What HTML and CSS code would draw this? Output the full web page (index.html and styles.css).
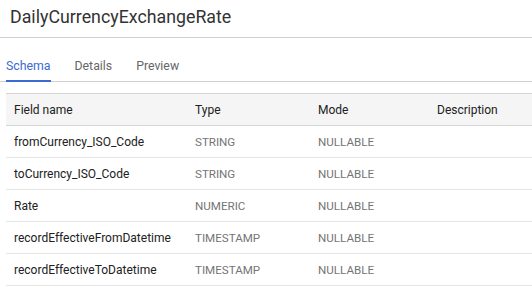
FILE: index.html
```html
<!DOCTYPE html>
<html>
<head>
<meta charset="utf-8">
<link rel="stylesheet" href="styles.css">
</head>
<body>
<header class="title-bar">
  <h1 class="title">DailyCurrencyExchangeRate</h1>
</header>
<nav class="tabs">
  <span class="tab active">Schema</span>
  <span class="tab">Details</span>
  <span class="tab">Preview</span>
</nav>
<div class="table-wrap">
  <table class="schema">
    <colgroup>
      <col class="c1"><col class="c2"><col class="c3"><col class="c4">
    </colgroup>
    <thead>
      <tr><th>Field name</th><th>Type</th><th>Mode</th><th>Description</th></tr>
    </thead>
    <tbody>
      <tr><td class="name">fromCurrency_ISO_Code</td><td class="meta">STRING</td><td class="meta">NULLABLE</td><td></td></tr>
      <tr><td class="name">toCurrency_ISO_Code</td><td class="meta">STRING</td><td class="meta">NULLABLE</td><td></td></tr>
      <tr><td class="name">Rate</td><td class="meta">NUMERIC</td><td class="meta">NULLABLE</td><td></td></tr>
      <tr><td class="name">recordEffectiveFromDatetime</td><td class="meta">TIMESTAMP</td><td class="meta">NULLABLE</td><td></td></tr>
      <tr><td class="name">recordEffectiveToDatetime</td><td class="meta">TIMESTAMP</td><td class="meta">NULLABLE</td><td></td></tr>
    </tbody>
  </table>
</div>
</body>
</html>
```
FILE: styles.css
```css
html, body {
  margin: 0;
  padding: 0;
  background: #fff;
  font-family: Roboto, "Liberation Sans", Arial, sans-serif;
  color: #212121;
}
.title-bar {
  height: 37px;
  border-bottom: 1px solid #d0d0d0;
  box-sizing: content-box;
}
.title {
  margin: 0;
  padding: 6px 0 0 10px;
  font-size: 17.8px;
  line-height: 22px;
  font-weight: 400;
  color: #333;
}
.tabs {
  display: flex;
  gap: 24px;
  padding: 0 0 0 6px;
  height: 44px;
  border-bottom: 1px solid #d0d0d0;
  box-sizing: border-box;
}
.tab {
  font-size: 12.3px;
  line-height: 15px;
  padding-top: 21px;
  color: #666;
  height: 44px;
  box-sizing: border-box;
}
.tab.active {
  color: #3a6bd4;
  border-bottom: 2px solid #3a6bd4;
}
.table-wrap {
  padding: 11px 0 0 6px;
}
.schema {
  width: 100%;
  border-collapse: collapse;
  table-layout: fixed;
  font-size: 12px;
}
.c1 { width: 181px; }
.c2 { width: 123px; }
.c3 { width: 119px; }
.schema th {
  text-align: left;
  font-weight: 400;
  color: #212121;
  background: #f5f5f5;
  height: 31px;
  padding: 0 0 0 8px;
  border-top: 1px solid #d6d6d6;
  border-bottom: 1px solid #d6d6d6;
}
.schema td {
  height: 31px;
  padding: 0 0 0 8px;
  border-bottom: 1px solid #e6e6e6;
  white-space: nowrap;
}
.schema td.name { color: #212121; }
.schema td.meta { color: #757575; font-size: 11.6px; }
```
